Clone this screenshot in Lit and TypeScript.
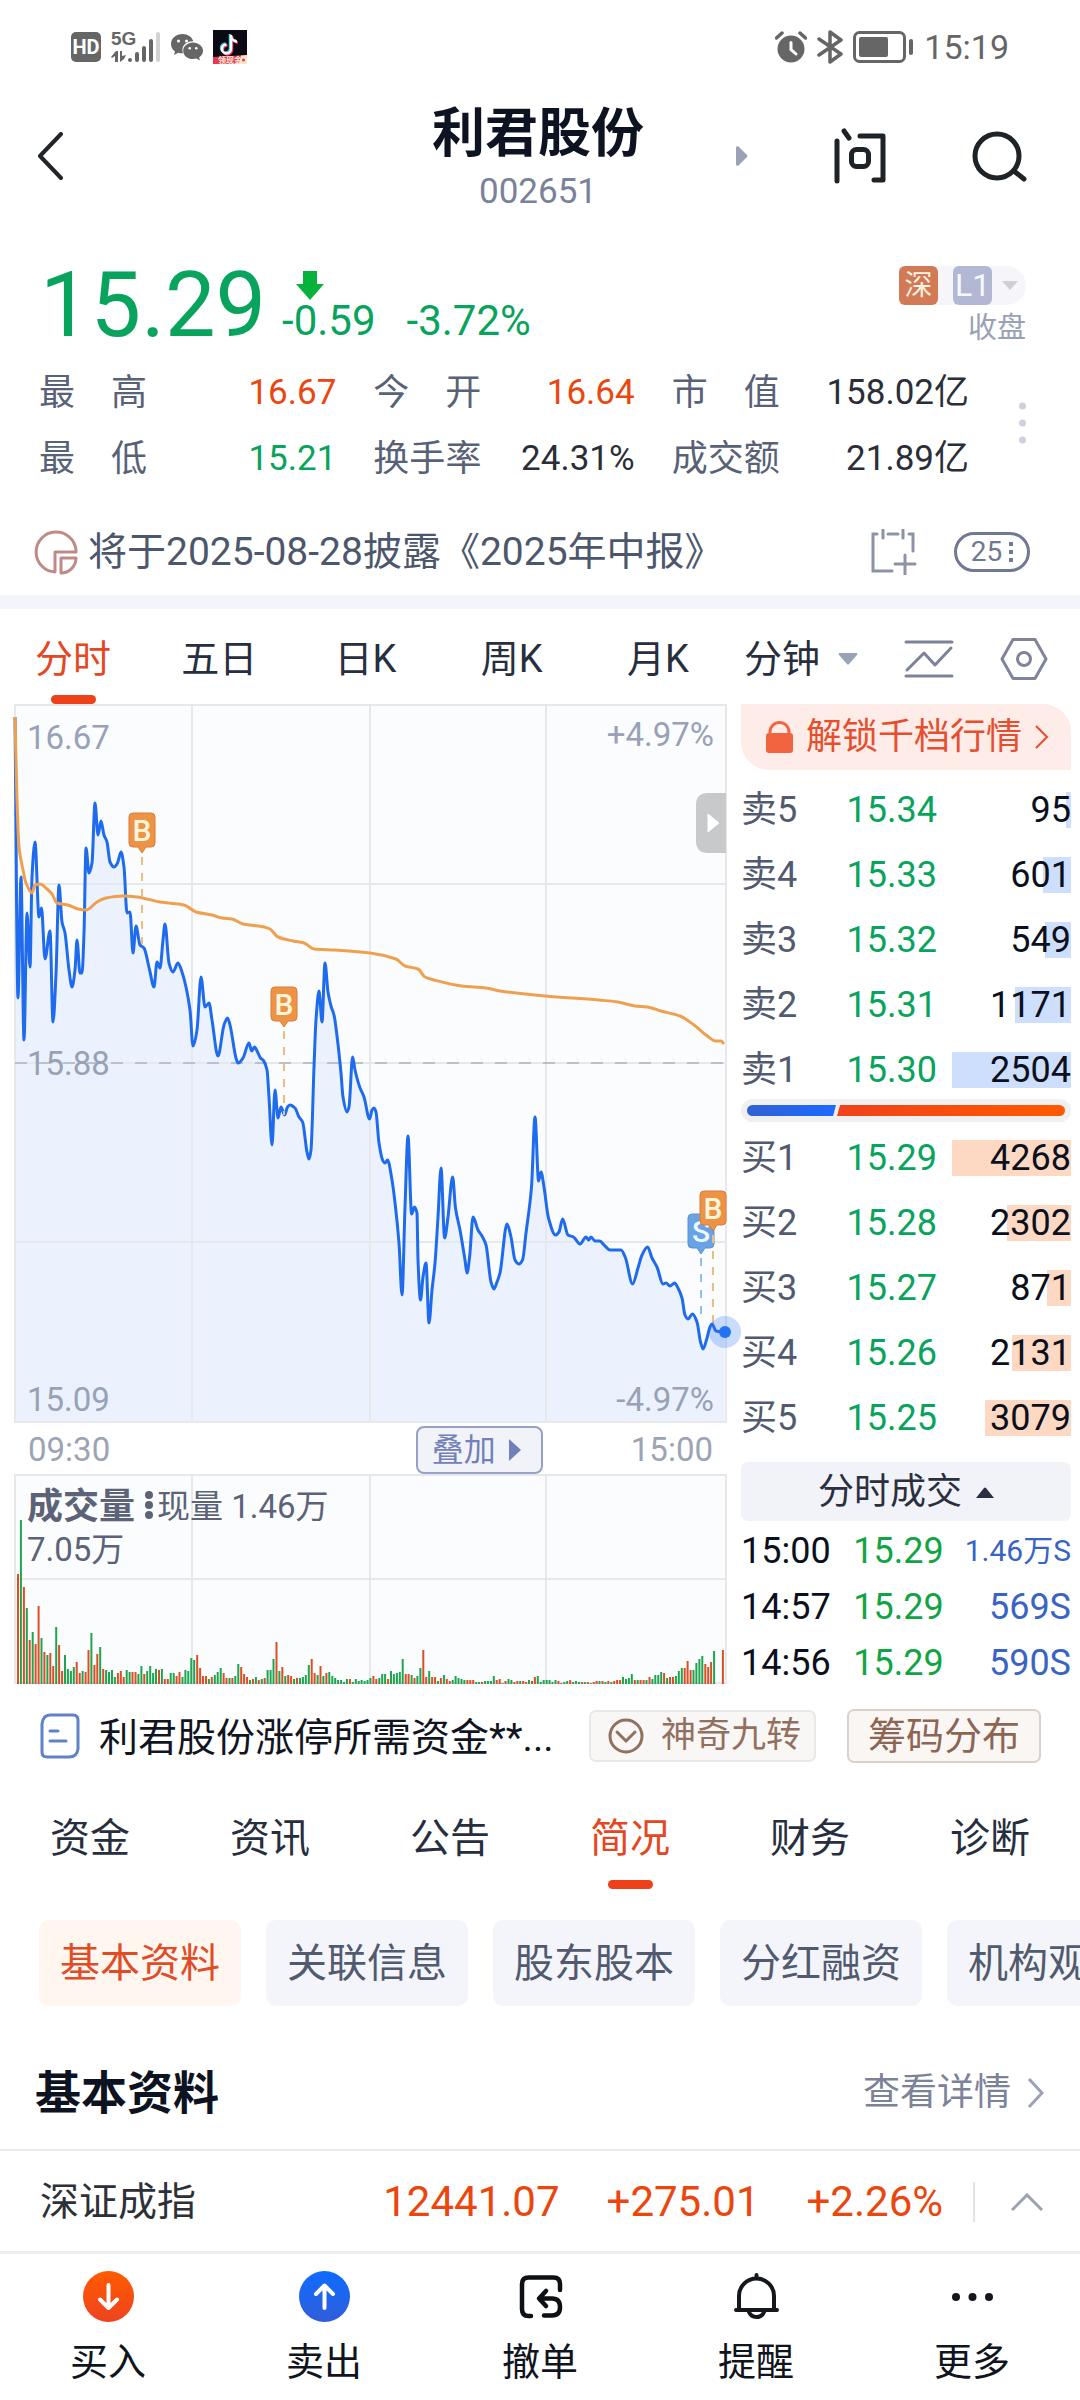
import { LitElement, html, svg, css } from "lit";
import { customElement, state } from "lit/decorators.js";
import { classMap } from "lit/directives/class-map.js";

type Point = [number, number];

const parsePoints = (text: string): Point[] =>
  text.trim().split(/\s+/).map((pair) => pair.split(",").map(Number) as Point);

const PRICE = parsePoints(`0,13 3,294 6,173 9,336 12,209 15,263 17,173 20,138 24,213 26.5,204 30,255 35,227 38,318 41,270 44,181
47,218 50,229 54,266 57,283 60,266 62,236 65,269 67,269 69,229 71,144 74,169 77,159 80,99 83,131 86,117 89,131 92,138 95,158 99,163
102.5,159 106,148 109,163 112,209 115,208 118,249 121,222 125,241 129,244 134.6,266 139,283 142,258 145,264 148,236 150,220 154,259
158,268 163,259 167,268 171,283 175,306 178,342 182,326 186,273 190,303 194,299 197,316 203,352 209,321 212.5,314 215,321 221,354
223,359 228,354 234,339 236.6,347 239.5,343 243,349 245.5,354 248,356 252,366 254,393 257,441 260,386 263,414 266,403 269.6,411
272.5,403 275,401 280,404 284,413 287.6,418 292,448 294,455 296,446 299,363 301,316 304,287 307,318 310,259 313,288 316,302 319,311
322.5,336 326,369 328,393 332,408 334,403 337.6,353 340,366 344.7,383 349,393 354.6,415 357,406 359,404 361,408 364,439 368,457
370,459 372.5,456 377,476 380.5,503 384,539 387,591 390,503 393,432 396.6,510 399.4,503 402,509 403,556 405.5,596 408,573 411,559
414,619 417,586 420,559 423,513 426,464 429.6,534 433,513 437.6,473 440.5,504 445,526 450,556 452,569 454.6,553 458,513 463,526
467,532 471,541 476,578 479,585 482,578 485,569 492,520 496,533 500,556 504,560 507.5,556 511,529 516.5,483 520,413 523.6,477
526,468 529,483 533.5,514 540.5,531 544,528 547.6,515 553,531 558.5,533 565,540 571,533 573.6,536 576,533 580,537 584.5,537 590,542
595,546 606,546 610.5,554 617.5,580 623,564 627,551 632.6,543 637,554 642,563 648,580 651,579 655,582 659.5,579 663,584 667,594
670,611 673,615 677.5,610 682,618 685.5,638 688,645 692,634 695,623 697,620 701,627 709.5,628`);

const AVERAGE = parsePoints(`0,13 2,96 4,143 8,166 11,179 17,189 20,181 25,180 32,185 37,190 42,199 53,201 63,205 71,206 82,198
91,194 108,192 122,193 145,198 169,201 181,208 197,211 207,214 217,215 228,220 249,223 255,225 263,233 278,237 289,239 299,245
320,246 355,249 381,255 390,262 403,265 410,273 419,276 447,282 471,284 485,287 530,292 584,296 603,298 620,302 632,303 646,307
665,312 679,321 691,331 701,337 706,337 709,340`);

/* One entry per minute: r = up, g = down, then the bar height; "-" has no trades. */
const VOLUME = `r110 g164 r97 g76 r44 g52 r40 r78 g46 r32 g29 r31 r18 g57 r39 r13 g29 g15 g13 g17 r22 r11 g13 r12 r34 g51 r19 r30
g37 r15 g14 g12 g14 g7 r11 r13 r7 g14 g12 r12 r12 g10 g18 r10 g13 g18 g11 g15 r14 g15 r5 r5 g11 g11 r8 r12 g7 g14 g13 g26 g24 r29
r16 r8 r8 g5 r7 g9 g12 g16 r11 r6 g6 r6 g8 g20 r17 r10 r7 g4 r5 g7 r4 g5 r6 g14 g14 g25 r42 g13 r17 g8 r9 r8 g5 r6 g6 g7 g9 g19 r25
r11 g9 r18 g8 r11 g12 g8 g6 g4 g4 g2 g5 r5 g2 g5 g3 g4 g3 g4 g6 r8 r5 g6 g10 g10 r5 g13 g10 g11 g12 g25 r10 r10 g9 r6 g8 g16 r34 r7
g13 r7 r7 g3 r6 g9 r5 r3 g4 g8 g6 g5 g4 r4 r4 r4 g2 g2 r2 g3 g3 g3 g8 r4 r5 g1 r3 g5 g4 r2 r3 g3 r3 r2 g4 r3 r7 g8 g2 g4 g4 g4 g2
g4 r3 r1 g2 g3 r4 g2 g3 g2 r2 g2 r2 g1 r2 r3 g3 r3 g2 r3 g2 r3 r4 r4 g7 g5 g6 g10 r4 g4 r4 r4 g4 r7 g5 g9 g9 g12 r11 g6 r7 r7 g8
g13 g16 r16 r23 r14 g14 g21 g25 g28 r20 r17 r22 g33 - - r34`.split(/\s+/);

/* Monotone cubic path through the points, flat at each local peak. */
function smoothPath(points: Point[]): string {
  const slope = (i: number) => (points[i + 1][1] - points[i][1]) / (points[i + 1][0] - points[i][0]);
  const tangents = points.map((_, i) => {
    if (i === 0) return slope(0);
    if (i === points.length - 1) return slope(i - 1);
    const before = slope(i - 1);
    const after = slope(i);
    return before * after <= 0 ? 0 : (2 * before * after) / (before + after);
  });
  let path = `M${points[0][0]} ${points[0][1]}`;
  for (let i = 1; i < points.length; i++) {
    const [x0, y0] = points[i - 1];
    const [x1, y1] = points[i];
    const third = (x1 - x0) / 3;
    path += `C${(x0 + third).toFixed(1)} ${(y0 + tangents[i - 1] * third).toFixed(1)} ${(x1 - third).toFixed(1)} ${(y1 - tangents[i] * third).toFixed(1)} ${x1} ${y1}`;
  }
  return path;
}

const PRICE_PATH = smoothPath(PRICE);
const AVERAGE_PATH = smoothPath(AVERAGE);

const STATS = [
  { label: ["最", "高"], value: "16.67", tone: "up" },
  { label: ["今", "开"], value: "16.64", tone: "up" },
  { label: ["市", "值"], value: "158.02亿", tone: "" },
  { label: ["最", "低"], value: "15.21", tone: "down" },
  { label: ["换", "手", "率"], value: "24.31%", tone: "" },
  { label: ["成", "交", "额"], value: "21.89亿", tone: "" },
];

const SELL = [
  { label: "卖5", price: "15.34", volume: 95 },
  { label: "卖4", price: "15.33", volume: 601 },
  { label: "卖3", price: "15.32", volume: 549 },
  { label: "卖2", price: "15.31", volume: 1171 },
  { label: "卖1", price: "15.30", volume: 2504 },
];

const BUY = [
  { label: "买1", price: "15.29", volume: 4268 },
  { label: "买2", price: "15.28", volume: 2302 },
  { label: "买3", price: "15.27", volume: 871 },
  { label: "买4", price: "15.26", volume: 2131 },
  { label: "买5", price: "15.25", volume: 3079 },
];

const TICKS = [
  { time: "15:00", price: "15.29", volume: "1.46万S", small: true },
  { time: "14:57", price: "15.29", volume: "569S", small: false },
  { time: "14:56", price: "15.29", volume: "590S", small: false },
];

const PERIODS = ["分时", "五日", "日K", "周K", "月K"];
const SECTIONS = ["资金", "资讯", "公告", "简况", "财务", "诊断"];
const TOPICS = ["基本资料", "关联信息", "股东股本", "分红融资", "机构观点"];

const shared = css`
  :host {
    display: block;
  }
  * {
    box-sizing: border-box;
  }
  svg {
    display: block;
    flex: none;
  }
  button {
    margin: 0;
    padding: 0;
    border: 0;
    background: none;
    color: inherit;
    font: inherit;
    cursor: pointer;
  }
  a {
    color: inherit;
    text-decoration: none;
  }
  .up {
    color: #ea460e;
  }
  .down {
    color: #08a35d;
  }
`;

@customElement("status-bar")
class StatusBar extends LitElement {
  static styles = [
    shared,
    css`
      .bar {
        display: flex;
        align-items: center;
        justify-content: space-between;
        padding: 22px 71px 0;
        color: #666;
        font-size: 34px;
        line-height: 50px;
      }
      .group {
        display: flex;
        align-items: center;
        gap: 10px;
      }
      .badge {
        font: 700 20px Roboto, sans-serif;
      }
      .network {
        font: 700 19px "Liberation Sans Narrow", "Liberation Sans", sans-serif;
      }
      .ribbon {
        font: 700 8px "Noto Sans CJK SC", sans-serif;
      }
    `,
  ];

  render() {
    return html`
      <div class="bar">
        <div class="group">
          <svg width="30" height="30" viewBox="0 0 30 30">
            <rect width="30" height="30" rx="5" fill="#666" />
            <text class="badge" x="15" y="22" text-anchor="middle" fill="#fff">HD</text>
          </svg>
          <svg width="50" height="34" viewBox="0 0 50 34">
            <text class="network" x="0" y="15" fill="#666">5G</text>
            <g fill="#666">
              <path d="M0 27L5 21H7V32H4V26L1 28ZM9 21H11V26L15 25L13 29L9 32Z" />
              <rect x="17" y="28" width="4" height="4" rx="2" />
              <rect x="24" y="22" width="4" height="10" rx="2" />
              <rect x="31" y="16" width="4" height="16" rx="2" />
              <rect x="38" y="9" width="4" height="23" rx="2" />
              <rect x="45" y="2" width="4" height="30" rx="2" fill="#d2d2d2" />
            </g>
          </svg>
          <svg width="32" height="28" viewBox="0 0 32 28">
            <path fill="#666" d="M11.500 1C5 1 0 5.400 0 11c0 3 1.500 5.600 4 7.500L3 22l4.200-2.200c1.500.4 3 .6 4.800.5C9.500 13.500 15 8 22.300 8.300 21 4 16.800 1 11.500 1z" />
            <path fill="#666" d="M22 9.500c-5.500 0-9.800 3.700-9.800 8.300s4.300 8.300 9.800 8.300c1.200 0 2.400-.2 3.500-.5L29 27.400l-.9-3C30.600 22.800 32 20.500 32 17.800c0-4.600-4.500-8.300-10-8.300z" />
            <g fill="#fff">
              <circle cx="7.500" cy="8" r="1.500" /><circle cx="15.500" cy="8" r="1.500" />
              <circle cx="18.700" cy="15.300" r="1.300" /><circle cx="25.300" cy="15.300" r="1.300" />
            </g>
          </svg>
          <svg width="34" height="34" viewBox="0 0 34 34">
            <rect width="34" height="34" fill="#0b0a14" />
            <g fill="none" stroke-width="2.500">
              <path stroke="#35d4dc" d="M17 4v14a4.500 4.500 0 1 1-4.500-4.500M17 5c.5 3 3 5.500 6 5.500" />
              <path stroke="#f2385c" d="M19 6v14a4.500 4.500 0 1 1-4.500-4.500M19 7c.5 3 3 5.500 6 5.500" />
              <path stroke="#fff" d="M18 5v14a4.500 4.500 0 1 1-4.500-4.500M18 6c.5 3 3 5.500 6 5.500" />
            </g>
            <path fill="#e8384f" d="M0 27L34 25V34H0Z" />
            <path fill="#fbe3c8" d="M28 25.500L34 25V34H26Z" />
            <text class="ribbon" x="5" y="33" fill="#ffeedd">领现金</text>
            <circle cx="30.500" cy="30" r="1.500" fill="#e8384f" />
          </svg>
        </div>
        <div class="group">
          <svg width="32" height="32" viewBox="0 0 32 32">
            <circle cx="16" cy="18" r="13.500" fill="#666" />
            <path d="M16 11.500V18.500L21 23" fill="none" stroke="#fff" stroke-width="3" stroke-linecap="round" />
            <path d="M1.500 7L7 2M30.500 7L25 2" stroke="#666" stroke-width="3.500" stroke-linecap="round" />
          </svg>
          <svg width="26" height="34" viewBox="0 0 26 34">
            <path d="M2 9L24 24L13 32V2L24 10L2 25" fill="none" stroke="#666" stroke-width="3.500" stroke-linejoin="round" stroke-linecap="round" />
          </svg>
          <svg width="61" height="32" viewBox="0 0 61 32">
            <rect x="1.500" y="1.500" width="50" height="29" rx="5" fill="none" stroke="#666" stroke-width="3" />
            <rect x="6" y="6" width="29" height="20" rx="2" fill="#666" />
            <rect x="56" y="8" width="4" height="16" rx="2" fill="#666" />
          </svg>
          <span>15:19</span>
        </div>
      </div>
    `;
  }
}

@customElement("stock-header")
class StockHeader extends LitElement {
  static styles = [
    shared,
    css`
      .header {
        display: grid;
        grid-template-columns: 1fr auto 1fr;
        align-items: center;
        padding: 26px 52px 0 36px;
        color: #1e2126;
      }
      .back {
        justify-self: start;
      }
      .title {
        padding: 5px 0 0 12px;
        text-align: center;
      }
      .name {
        margin: 0 0 5px;
        color: #0d1321;
        font-size: 53px;
        font-weight: 700;
        line-height: 62px;
      }
      .code {
        margin: 0;
        color: #79829a;
        font-size: 35px;
        line-height: 44px;
      }
      .actions {
        display: flex;
        align-items: center;
        justify-content: space-between;
        padding-left: 92px;
      }
    `,
  ];

  render() {
    return html`
      <header class="header">
        <button class="back" aria-label="返回">
          <svg width="28" height="48" viewBox="0 0 28 48">
            <path d="M25 2L4 24L25 46" fill="none" stroke="#22252a" stroke-width="4" stroke-linecap="round" stroke-linejoin="round" />
          </svg>
        </button>
        <div class="title">
          <h1 class="name">利君股份</h1>
          <p class="code">002651</p>
        </div>
        <div class="actions">
          <button aria-label="下一只">
            <svg width="12" height="20" viewBox="0 0 12 20">
              <path d="M0 1L2 0L11 9Q12 10 11 11L2 20L0 19Z" fill="#9ba2b4" />
            </svg>
          </button>
          <button aria-label="提问">
            <svg width="54" height="56" viewBox="0 0 54 56" fill="none" stroke="#1e2327" stroke-width="5" stroke-linecap="round" stroke-linejoin="round">
              <path d="M4 13V53M11 3L16 10M27 8H50V52H41" />
              <rect x="18.500" y="21.500" width="17" height="17" rx="5" />
            </svg>
          </button>
          <button aria-label="搜索">
            <svg width="56" height="52" viewBox="0 0 56 52" fill="none" stroke="#1e2327" stroke-width="5" stroke-linecap="round">
              <circle cx="25" cy="26" r="22" />
              <path d="M42 41L52 49" />
            </svg>
          </button>
        </div>
      </header>
    `;
  }
}

@customElement("stock-quote")
class StockQuote extends LitElement {
  static styles = [
    shared,
    css`
      .summary {
        display: flex;
        align-items: center;
        padding: 42px 54px 0 40px;
      }
      .price {
        font-size: 90px;
        line-height: 100px;
      }
      .change {
        display: flex;
        flex-direction: column;
        padding-left: 16px;
        font-size: 42px;
        line-height: 42px;
      }
      .arrow {
        margin-left: 14px;
      }
      .numbers {
        display: flex;
        gap: 31px;
      }
      .market {
        display: flex;
        flex-direction: column;
        align-items: flex-end;
        gap: 5px;
        margin-left: auto;
        color: #99a1b4;
        font-size: 29px;
        line-height: 36px;
      }
      .badges {
        display: flex;
        align-items: center;
        gap: 15px;
        padding-right: 8px;
        border-radius: 4px 20px 20px 4px;
        background: #f6f6fa;
      }
      .exchange,
      .level {
        width: 39px;
        border-radius: 6px;
        background: #d17a55;
        color: #fff3e4;
        font-size: 28px;
        line-height: 39px;
        text-align: center;
      }
      .level {
        background: #b2b8d3;
        color: #f8f9ff;
        font-size: 32px;
      }
      .caret {
        margin-left: -5px;
      }
      .details {
        display: flex;
        align-items: center;
        justify-content: space-between;
        padding: 4px 54px 0 39px;
      }
      .stats {
        display: grid;
        flex: 1;
        grid-template-columns: 297fr 261fr 297fr;
        column-gap: 37px;
        margin: 0 50px 0 0;
        color: #2a2e37;
        font-size: 35px;
        line-height: 66px;
      }
      .stat {
        display: flex;
        justify-content: space-between;
      }
      .label {
        display: flex;
        justify-content: space-between;
        width: 108px;
        color: #586277;
        font-size: 36px;
      }
      .value {
        margin: 0;
      }
      .options {
        padding-bottom: 6px;
      }
      .notice {
        display: flex;
        align-items: center;
        padding: 31px 50px 14px 34px;
        color: #4d576c;
        font-size: 39px;
        line-height: 58px;
      }
      .message {
        flex: 1;
        padding-left: 9px;
      }
      .count {
        display: flex;
        align-items: center;
        justify-content: center;
        gap: 7px;
        width: 76px;
        margin-left: 37px;
        border: 3px solid #6f7990;
        border-radius: 20px;
        color: #6f7990;
        font-size: 28px;
        line-height: 34px;
      }
      .divider {
        height: 14px;
        background: #f3f5fa;
      }
    `,
  ];

  render() {
    return html`
      <section>
        <div class="summary">
          <span class="price down">15.29</span>
          <div class="change down">
            <svg class="arrow" width="28" height="29" viewBox="0 0 28 29">
              <path d="M7 0H21V13H28L14 29L0 13H7Z" fill="#06b23c" />
            </svg>
            <div class="numbers"><span>-0.59</span><span>-3.72%</span></div>
          </div>
          <div class="market">
            <div class="badges">
              <span class="exchange">深</span>
              <span class="level">L1</span>
              <svg class="caret" width="16" height="10" viewBox="0 0 16 10"><path d="M0 0H16L8 9Z" fill="#cdd0d6" /></svg>
            </div>
            <span>收盘</span>
          </div>
        </div>
        <div class="details">
          <dl class="stats">
            ${STATS.map(
              (stat) => html`
                <div class="stat">
                  <dt class="label">${stat.label.map((char) => html`<span>${char}</span>`)}</dt>
                  <dd class="value ${stat.tone}">${stat.value}</dd>
                </div>
              `
            )}
          </dl>
          <button class="options" aria-label="更多指标">
            <svg width="7" height="42" viewBox="0 0 7 42" fill="#ccd1dc">
              <circle cx="3.500" cy="4" r="3.500" /><circle cx="3.500" cy="21" r="3.500" /><circle cx="3.500" cy="38" r="3.500" />
            </svg>
          </button>
        </div>
        <div class="notice">
          <svg width="45" height="46" viewBox="0 0 45 46" fill="none" stroke="#c08a89" stroke-width="3">
            <path d="M42 21A20 20 0 1 0 21 43V23H42Z" stroke-linejoin="round" />
            <path d="M27 44V29H42A15 15 0 0 1 27 44Z" stroke-linejoin="round" />
          </svg>
          <span class="message">将于2025-08-28披露《2025年中报》</span>
          <button aria-label="加入日历">
            <svg width="46" height="46" viewBox="0 0 46 46" fill="none" stroke="#8b93a5" stroke-width="3" stroke-linecap="round">
              <path d="M6 5H2V42H21M17 5H27M38 5H42V22M12 1V9M32 1V9M24 35H44M34 26V45" />
            </svg>
          </button>
          <button class="count" aria-label="25条公告">
            <span>25</span>
            <svg width="4" height="20" viewBox="0 0 4 20" fill="#6f7990">
              <rect width="4" height="4" /><rect y="8" width="4" height="4" /><rect y="16" width="4" height="4" />
            </svg>
          </button>
        </div>
        <div class="divider"></div>
      </section>
    `;
  }
}

@customElement("price-chart")
class PriceChart extends LitElement {
  static styles = [
    shared,
    css`
      .plot {
        width: 100%;
        height: auto;
        overflow: visible;
      }
      .grid {
        fill: none;
        stroke: #e6e8eb;
        stroke-width: 2;
      }
      .scale {
        fill: #98a1b5;
        font-size: 33px;
      }
      .letter {
        font-size: 30px;
        font-weight: 500;
      }
      .axis {
        display: flex;
        align-items: center;
        padding: 4px 13px 0;
        color: #9ca4b4;
        font-size: 33px;
        line-height: 48px;
      }
      .overlay {
        display: flex;
        align-items: center;
        gap: 13px;
        margin: 0 88px 0 auto;
        padding: 0 20px 0 14px;
        border: 2px solid #95a1c6;
        border-radius: 8px;
        background: #f2f3f9;
        color: #7381b8;
        font-size: 32px;
        line-height: 44px;
      }
      .volume-name {
        fill: #5c6377;
        font-size: 36px;
        font-weight: 700;
      }
      .volume-text {
        fill: #5c6377;
        font-size: 33px;
      }
    `,
  ];

  private marker(letter: string, x: number, top: number, end: number) {
    const sell = letter === "S";
    return svg`
      <path d="M${x} ${top + 44}V${end}" stroke=${sell ? "#92bdec" : "#ecbd83"} stroke-width="2" stroke-dasharray="8 8" />
      <path d="M${x - 9} ${top}H${x + 9}Q${x + 13} ${top} ${x + 13} ${top + 4}V${top + 30}Q${x + 13} ${top + 34} ${x + 9} ${top + 34}H${x + 4}L${x} ${top + 40}L${x - 4} ${top + 34}H${x - 9}Q${x - 13} ${top + 34} ${x - 13} ${top + 30}V${top + 4}Q${x - 13} ${top} ${x - 9} ${top}Z"
        fill=${sell ? "#68a3e4" : "#ed9345"} stroke=${sell ? "#5c92d4" : "#dc7b35"} stroke-width="1" />
      <text class="letter" x=${x} y=${top + 28} text-anchor="middle" fill=${sell ? "#eff8ff" : "#fff5d8"}>${letter}</text>
    `;
  }

  render() {
    return html`
      <svg class="plot" viewBox="0 0 711 718" role="img" aria-label="分时走势">
        <rect width="711" height="718" fill="#fbfcfe" />
        <path d="${PRICE_PATH}V718H0Z" fill="#ebf2fd" />
        <path class="grid" d="M0 1H711V718H0ZM177 0V718M355 0V718M531 0V718M0 180H711M0 538H711M0 359H711" />
        <path d="M0 359H711" stroke="#bac1cb" stroke-width="2" stroke-dasharray="12 12" />
        <path d=${PRICE_PATH} fill="none" stroke="#1e6bee" stroke-width="3" stroke-linejoin="round" />
        <path d=${AVERAGE_PATH} fill="none" stroke="#efa04f" stroke-width="3" stroke-linejoin="round" />
        <g class="scale">
          <text x="12" y="45">16.67</text>
          <text x="12" y="371">15.88</text>
          <text x="12" y="707">15.09</text>
          <text x="699" y="42" text-anchor="end">+4.97%</text>
          <text x="699" y="707" text-anchor="end">-4.97%</text>
        </g>
        <path d="M711 89H693Q681 89 681 101V137Q681 149 693 149H711Z" fill="#c7c9cb" />
        <path d="M693 110L704 119L693 128Z" fill="#fff" stroke="#fff" stroke-linejoin="round" />
        ${this.marker("B", 127, 109, 240)} ${this.marker("B", 269, 283, 411)}
        ${this.marker("S", 686, 510, 618)} ${this.marker("B", 698, 487, 620)}
        <circle cx="710" cy="628" r="16" fill="#2b75f5" fill-opacity="0.250" />
        <circle cx="710" cy="628" r="6" fill="#2372f5" />
      </svg>
      <div class="axis">
        <span>09:30</span>
        <button class="overlay">
          叠加
          <svg width="12" height="22" viewBox="0 0 12 22"><path d="M0 0L12 11L0 22Z" fill="#7180bd" /></svg>
        </button>
        <span>15:00</span>
      </div>
      <svg class="plot" viewBox="0 0 711 210" role="img" aria-label="成交量">
        <rect width="711" height="210" fill="#fbfcfe" />
        <path class="grid" d="M0 1H711V209H0ZM177 0V210M355 0V210M531 0V210M0 105H711" />
        ${VOLUME.map((entry, i) => {
          const height = Number(entry.slice(1));
          if (!height) return null;
          const color = entry[0] === "r" ? "#dc4f26" : "#1ea550";
          return svg`<rect x=${(2 + i * 2.937).toFixed(1)} y=${210 - height} width="2" height=${height} fill=${color} />`;
        })}
        <text class="volume-name" x="12" y="45">成交量</text>
        <g fill="#5c6377"><circle cx="134" cy="21" r="4" /><circle cx="134" cy="31" r="4" /><circle cx="134" cy="41" r="4" /></g>
        <text class="volume-text" x="142" y="44">现量 1.46万</text>
        <text class="volume-text" x="12" y="87">7.05万</text>
      </svg>
    `;
  }
}

@customElement("order-book")
class OrderBook extends LitElement {
  static styles = [
    shared,
    css`
      .unlock {
        display: flex;
        align-items: center;
        justify-content: space-between;
        width: 100%;
        margin-bottom: 8px;
        padding: 0 22px 0 25px;
        border-radius: 0 28px 0 28px;
        background: #feece8;
        color: #e64f2e;
        font-size: 36px;
        line-height: 66px;
      }
      .table {
        width: 100%;
        border-collapse: collapse;
        table-layout: fixed;
        color: #0b101d;
        font-size: 36px;
        line-height: 65px;
      }
      .table th,
      .table td {
        padding: 0;
        font-weight: 400;
        text-align: left;
        white-space: nowrap;
      }
      .table .level {
        width: 32%;
        color: #515a6e;
      }
      .table .price {
        width: 32%;
      }
      .table .amount {
        position: relative;
        text-align: right;
      }
      .depth {
        position: absolute;
        top: 14px;
        right: 0;
        height: 36px;
        background: #cedefd;
      }
      .buy .depth {
        background: #fdd8c3;
      }
      .number {
        position: relative;
      }
      .ratio {
        display: flex;
        margin: -4px 0 4px;
        padding: 6px;
        border-radius: 12px;
        background: #f0f0f2;
      }
      .ratio-sell,
      .ratio-buy {
        height: 11px;
        border-radius: 6px 0 0 6px;
        background: linear-gradient(90deg, #3260d4, #1b6aff);
        clip-path: polygon(0 0, 100% 0, calc(100% - 3px) 100%, 0 100%);
      }
      .ratio-buy {
        flex: 1;
        border-radius: 0 6px 6px 0;
        background: linear-gradient(90deg, #ef421b, #ff5a00);
        clip-path: polygon(4px 0, 100% 0, 100% 100%, 1px 100%);
      }
      .trades {
        display: flex;
        align-items: center;
        justify-content: center;
        gap: 14px;
        width: 100%;
        margin: 11px 0 2px;
        padding-top: 1px;
        border-radius: 7px;
        background: #f2f3f8;
        color: #2a3040;
        font-size: 36px;
        line-height: 58px;
      }
      .ticks {
        line-height: 56px;
      }
      .ticks .time {
        width: 34%;
      }
      .ticks .price {
        width: 30%;
        color: #12a344;
      }
      .ticks .amount {
        color: #3a64c4;
      }
      .ticks .small {
        font-size: 30px;
      }
    `,
  ];

  private levels(rows: typeof SELL, side: string) {
    const largest = Math.max(...rows.map((row) => row.volume));
    return html`
      <table class="table ${side}">
        <tbody>
          ${rows.map(
            (row) => html`
              <tr>
                <th class="level" scope="row">${row.label}</th>
                <td class="price down">${row.price}</td>
                <td class="amount">
                  <span class="depth" style="width:${((row.volume / largest) * 100).toFixed(0)}%"></span>
                  <span class="number">${row.volume}</span>
                </td>
              </tr>
            `
          )}
        </tbody>
      </table>
    `;
  }

  render() {
    return html`
      <button class="unlock">
        <svg width="27" height="32" viewBox="0 0 27 32">
          <rect y="12" width="27" height="20" rx="3" fill="#f2643f" />
          <path d="M4 13V11A9.500 9.500 0 0 1 23 11V13" fill="none" stroke="#f2643f" stroke-width="3" />
        </svg>
        解锁千档行情
        <svg width="14" height="24" viewBox="0 0 14 24"><path d="M1 1L12 12L1 23" fill="none" stroke="#e64f2e" stroke-width="2" /></svg>
      </button>
      ${this.levels(SELL, "sell")}
      <div class="ratio"><span class="ratio-sell" style="width:28%"></span><span class="ratio-buy"></span></div>
      ${this.levels(BUY, "buy")}
      <button class="trades">
        分时成交
        <svg width="18" height="11" viewBox="0 0 18 11"><path d="M0 11L8 1Q9 0 10 1L18 11Z" fill="#2a3040" /></svg>
      </button>
      <table class="table ticks">
        <tbody>
          ${TICKS.map(
            (tick) => html`
              <tr>
                <td class="time">${tick.time}</td>
                <td class="price">${tick.price}</td>
                <td class=${classMap({ amount: true, small: tick.small })}>${tick.volume}</td>
              </tr>
            `
          )}
        </tbody>
      </table>
    `;
  }
}

@customElement("trade-nav")
class TradeNav extends LitElement {
  static styles = [
    shared,
    css`
      .nav {
        display: grid;
        grid-template-columns: repeat(5, 1fr);
        padding: 17px 0 13px;
        color: #10141d;
        font-size: 38px;
        line-height: 50px;
      }
      .item {
        display: flex;
        flex-direction: column;
        align-items: center;
        gap: 15px;
      }
    `,
  ];

  render() {
    return html`
      <nav class="nav">
        <button class="item">
          <svg width="51" height="51" viewBox="0 0 51 51">
            <defs><linearGradient id="buy" x2="0" y2="1"><stop stop-color="#ff5b00" /><stop offset="1" stop-color="#ee4320" /></linearGradient></defs>
            <circle cx="25.500" cy="25.500" r="25.500" fill="url(#buy)" />
            <path d="M25.500 14V37M17 28.500L25.500 37L34 28.500" fill="none" stroke="#fff" stroke-width="4" stroke-linecap="round" stroke-linejoin="round" />
          </svg>
          买入
        </button>
        <button class="item">
          <svg width="51" height="51" viewBox="0 0 51 51">
            <defs><linearGradient id="sell" x2="0" y2="1"><stop stop-color="#0d6cff" /><stop offset="1" stop-color="#315dda" /></linearGradient></defs>
            <circle cx="25.500" cy="25.500" r="25.500" fill="url(#sell)" />
            <path d="M25.500 37V15M17 23L25.500 14.500L34 23" fill="none" stroke="#fff" stroke-width="4" stroke-linecap="round" stroke-linejoin="round" />
          </svg>
          卖出
        </button>
        <button class="item">
          <svg width="51" height="51" viewBox="0 0 51 51" fill="none" stroke="#0d1014" stroke-width="4.500" stroke-linecap="round" stroke-linejoin="round">
            <path d="M45 19V13Q45 6.500 38.500 6.500H13.500Q7 6.500 7 13V38Q7 45 13.500 45H16" />
            <path d="M31 20L24 27.500L31 35M25 27.500H37Q45 27.500 45 36T37 44.500H29" />
          </svg>
          撤单
        </button>
        <button class="item">
          <svg width="51" height="51" viewBox="0 0 51 51" fill="none" stroke="#14181c" stroke-width="4" stroke-linecap="round" stroke-linejoin="round">
            <path d="M5 39H46M8 38V25A17.500 17.500 0 0 1 43 25V38M25.500 4V6" />
            <path d="M18 41Q20 46 25.500 46T33 41" />
          </svg>
          提醒
        </button>
        <button class="item">
          <svg width="51" height="51" viewBox="0 0 51 51" fill="#14181c">
            <circle cx="9" cy="26" r="4" /><circle cx="25.500" cy="26" r="4" /><circle cx="42" cy="26" r="4" />
          </svg>
          更多
        </button>
      </nav>
    `;
  }
}

@customElement("app-root")
class AppRoot extends LitElement {
  @state() private period = "分时";
  @state() private section = "简况";
  @state() private topic = "基本资料";

  static styles = [
    shared,
    css`
      :host {
        overflow: hidden;
        background: #fff;
        font-family: Roboto, "Noto Sans CJK SC", sans-serif;
      }
      .toolbar {
        display: grid;
        grid-template-columns: 731fr 349fr;
        color: #272e3d;
        font-size: 38px;
        line-height: 50px;
      }
      .periods {
        display: grid;
        grid-template-columns: repeat(5, 1fr);
      }
      .tab {
        display: flex;
        flex-direction: column;
        align-items: center;
        gap: 11px;
        padding-top: 25px;
      }
      .tab::after {
        width: 45px;
        height: 9px;
        border-radius: 5px;
        content: "";
      }
      .active {
        color: #e44721;
      }
      .active::after {
        background: #ee4119;
      }
      .tools {
        display: flex;
        align-items: center;
        justify-content: space-between;
        padding: 4px 32px 0 13px;
      }
      .minutes {
        display: flex;
        align-items: center;
        gap: 18px;
      }
      .market {
        display: grid;
        grid-template-columns: 711fr 330fr;
        column-gap: 15px;
        padding: 0 9px 0 15px;
      }
      .news {
        display: flex;
        align-items: center;
        padding: 18px 39px 0 40px;
        line-height: 50px;
      }
      .headline {
        flex: 1;
        padding: 3px 0 0 19px;
        color: #11151f;
        font-size: 39px;
        white-space: nowrap;
      }
      .nine,
      .chips {
        display: flex;
        align-items: center;
        gap: 17px;
        padding: 0 13px 0 17px;
        border: 2px solid #e9e8e7;
        border-radius: 7px;
        background: #f9f7f5;
        color: #91705f;
        font-size: 35px;
        line-height: 48px;
      }
      .chips {
        margin-left: 31px;
        padding: 0 19px;
        border-color: #dbd1cc;
        background: #faf6f3;
        color: #8c6553;
        font-size: 38px;
        line-height: 50px;
      }
      .sections {
        display: grid;
        grid-template-columns: repeat(6, 1fr);
        padding-top: 21px;
        color: #272e3d;
        font-size: 40px;
        line-height: 60px;
      }
      .topics {
        display: flex;
        gap: 25px;
        padding: 31px 39px 0;
        overflow-x: auto;
        scrollbar-width: none;
      }
      .topic {
        flex: none;
        padding: 2px 21px 0;
        border-radius: 10px;
        background: #f4f5fa;
        color: #515a6e;
        font-size: 40px;
        line-height: 84px;
      }
      .chosen {
        background: #fff6f0;
        color: #e04c26;
      }
      .profile {
        display: flex;
        align-items: center;
        justify-content: space-between;
        padding: 52px 36px 21px 35px;
        line-height: 70px;
      }
      .heading {
        margin: 0;
        color: #0d1321;
        font-size: 46px;
        font-weight: 700;
      }
      .more {
        display: flex;
        align-items: center;
        gap: 16px;
        color: #7b8398;
        font-size: 37px;
      }
      .index {
        display: flex;
        align-items: center;
        gap: 47px;
        padding: 2px 37px 0 40px;
        border-top: 2px solid #e9eaec;
        border-bottom: 3px solid #ecefef;
        font-size: 42px;
        line-height: 98px;
      }
      .index-name {
        margin-right: auto;
        color: #2d3036;
        font-size: 39px;
      }
      .expand {
        margin-left: -17px;
        padding: 11px 0 11px 36px;
        border-left: 2px solid #e2e4e8;
      }
    `,
  ];

  render() {
    return html`
      <status-bar></status-bar>
      <stock-header></stock-header>
      <stock-quote></stock-quote>
      <div class="toolbar">
        <div class="periods">
          ${PERIODS.map(
            (name) => html`
              <button class=${classMap({ tab: true, active: name === this.period })} @click=${() => (this.period = name)}>${name}</button>
            `
          )}
        </div>
        <div class="tools">
          <button class="minutes">
            分钟
            <svg width="20" height="12" viewBox="0 0 20 12"><path d="M1 0H19Q20 1 19 2L11 11Q10 12 9 11L1 2Q0 1 1 0Z" fill="#9aa2b5" /></svg>
          </button>
          <button aria-label="指标">
            <svg width="50" height="38" viewBox="0 0 50 38" fill="none" stroke="#7a8398" stroke-width="3" stroke-linecap="round" stroke-linejoin="round">
              <path d="M2 2H48M2 36H48M3 30L20 13L31 25L47 8" />
            </svg>
          </button>
          <button aria-label="图表设置">
            <svg width="48" height="42" viewBox="0 0 48 42" fill="none" stroke="#80849a" stroke-width="3" stroke-linejoin="round">
              <path d="M13 1.500H35L46 21L35 40.500H13L2 21Z" />
              <circle cx="24" cy="21" r="6.500" />
            </svg>
          </button>
        </div>
      </div>
      <main>
        <section class="market">
          <price-chart></price-chart>
          <order-book></order-book>
        </section>
        <div class="news">
          <svg width="40" height="46" viewBox="0 0 40 46" fill="none" stroke="#5f82ca" stroke-width="3" stroke-linecap="round">
            <path d="M10 2H33Q38 2 38 7V36Q37 44 29 44H7Q2 44 2 39V11Q3 2 10 2Z" stroke-linejoin="round" />
            <path d="M10 18H18M10 28H26" />
          </svg>
          <a class="headline" href="#news">利君股份涨停所需资金**...</a>
          <button class="nine">
            <svg width="36" height="36" viewBox="0 0 36 36" fill="none" stroke="#91705f" stroke-width="3" stroke-linecap="round" stroke-linejoin="round">
              <circle cx="18" cy="18" r="16" />
              <path d="M9 14L18 23L27 14" />
            </svg>
            神奇九转
          </button>
          <button class="chips">筹码分布</button>
        </div>
        <div class="sections">
          ${SECTIONS.map(
            (name) => html`
              <button class=${classMap({ tab: true, active: name === this.section })} @click=${() => (this.section = name)}>${name}</button>
            `
          )}
        </div>
        <div class="topics">
          ${TOPICS.map(
            (name) => html`
              <button class=${classMap({ topic: true, chosen: name === this.topic })} @click=${() => (this.topic = name)}>${name}</button>
            `
          )}
        </div>
        <div class="profile">
          <h2 class="heading">基本资料</h2>
          <a class="more" href="#profile">
            查看详情
            <svg width="17" height="32" viewBox="0 0 17 32"><path d="M2 2L15 16L2 30" fill="none" stroke="#9ba2b3" stroke-width="3" /></svg>
          </a>
        </div>
      </main>
      <div class="index">
        <span class="index-name">深证成指</span>
        <span class="up">12441.07</span>
        <span class="up">+275.01</span>
        <span class="up">+2.26%</span>
        <button class="expand" aria-label="展开">
          <svg width="32" height="18" viewBox="0 0 32 18"><path d="M1 17L16 2L31 17" fill="none" stroke="#9ba2b3" stroke-width="3" /></svg>
        </button>
      </div>
      <trade-nav></trade-nav>
    `;
  }
}
